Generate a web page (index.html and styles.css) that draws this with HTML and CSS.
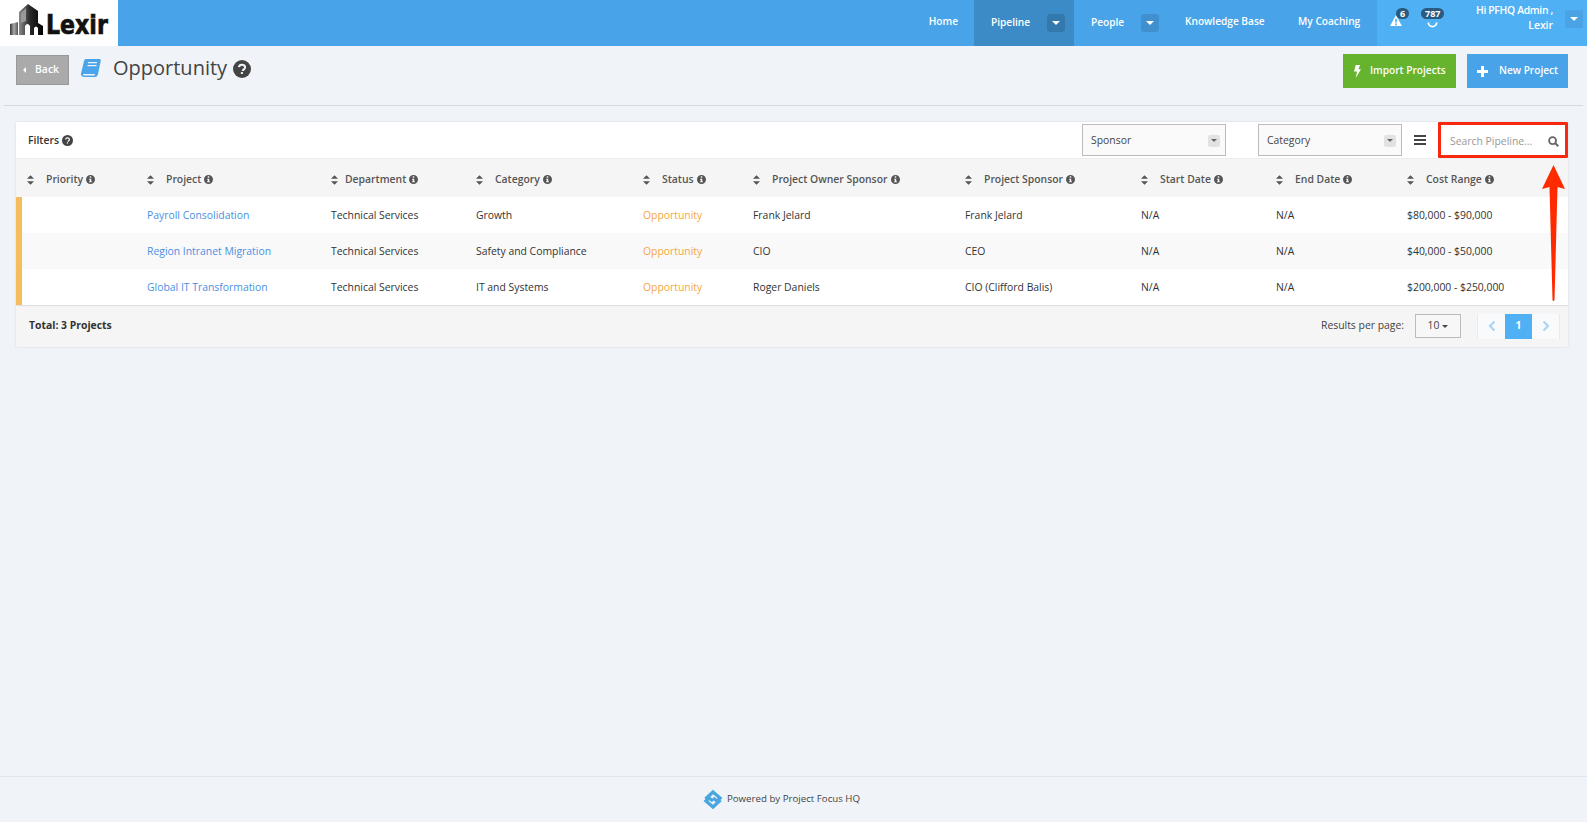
FILE: index.html
```html
<!DOCTYPE html>
<html lang="en">
<head>
<meta charset="utf-8">
<title>Opportunity</title>
<link rel="stylesheet" href="styles.css">
</head>
<body>
<svg class="defs" width="0" height="0" aria-hidden="true">
  <defs>
    <symbol id="sort" viewBox="0 0 8 11"><path d="M4 0 8 4H0zM0 7h8l-4 4z"/></symbol>
    <symbol id="info" viewBox="0 0 12 12"><path fill-rule="evenodd" d="M6 0a6 6 0 1 1 0 12A6 6 0 0 1 6 0zM5 1.800v1.800h2V1.800zM4.200 5v1.200H5v2.200h-.8v1.200h3.600V8.400H7V5z"/></symbol>
    <symbol id="help" viewBox="0 0 18 18"><circle cx="9" cy="9" r="9"/><path d="M5.900 7.200c.2-1.700 1.500-2.500 3.100-2.500 1.800 0 3.100 1 3.100 2.500 0 2.200-2.300 2.100-2.300 3.700" fill="none" stroke="#f0f4f8" stroke-width="2"/><rect x="7.900" y="12" width="2" height="2" fill="#f0f4f8"/></symbol>
    <symbol id="help-w" viewBox="0 0 18 18"><circle cx="9" cy="9" r="9"/><path d="M5.900 7.200c.2-1.700 1.500-2.500 3.100-2.500 1.800 0 3.100 1 3.100 2.500 0 2.200-2.300 2.100-2.300 3.700" fill="none" stroke="#fff" stroke-width="2"/><rect x="7.900" y="12" width="2" height="2" fill="#fff"/></symbol>
    <linearGradient id="bld" x1="0" y1="0" x2="1" y2="0">
      <stop offset="0" stop-color="#8a8a8a"/><stop offset=".45" stop-color="#2a2a2a"/><stop offset="1" stop-color="#000"/>
    </linearGradient>
    <linearGradient id="bld-l" x1="0" y1="0" x2="1" y2="0">
      <stop offset="0" stop-color="#333"/><stop offset=".5" stop-color="#aaa"/><stop offset="1" stop-color="#555"/>
    </linearGradient>
  </defs>
</svg>

<header class="topbar">
  <a class="logo">
    <svg class="logo-mark" viewBox="0 0 34 31" width="34" height="31"><path fill="url(#bld-l)" d="M0 20l8-2v13H0z"/><path fill="url(#bld)" d="M9 8l9-8 10 7v12l5 3v9h-5v-7q-2-3-4 0v7h-4v-9q-2.500-4-5 0v9H9z"/><path fill="#999" d="M11 9l5-5v13l-5 2z"/></svg>
    <span class="logo-text">Lexir</span>
  </a>
  <nav class="nav">
    <a class="nav-item home">Home</a>
    <a class="nav-item active pipeline">Pipeline<span class="caret-box dark"><i class="tri white"></i></span></a>
    <a class="nav-item people">People<span class="caret-box"><i class="tri white"></i></span></a>
    <a class="nav-item kb">Knowledge Base</a>
    <a class="nav-item coach">My Coaching</a>
  </nav>
  <div class="user-zone">
    <div class="notif alert">
      <svg viewBox="0 0 14 13" width="12" height="11"><path fill="#fff" fill-rule="evenodd" d="M7 0l7 13H0zM6 4.500V9h2V4.500zM6 10v2h2v-2z"/></svg>
      <span class="badge">6</span>
    </div>
    <div class="notif sync">
      <svg viewBox="0 0 12 12" width="11" height="11"><path fill="none" stroke="#fff" stroke-width="2" d="M10.500 6A4.500 4.500 0 0 1 1.500 6"/></svg>
      <span class="badge">787</span>
    </div>
    <div class="user"><span class="user-name">Hi PFHQ Admin ,</span><span>Lexir</span></div>
    <span class="caret-box user-caret"><i class="tri white"></i></span>
  </div>
</header>

<section class="page-head">
  <a class="back"><i class="tri-left"></i>Back</a>
  <svg class="book" viewBox="0 0 20 18" width="20" height="18"><path fill="#4aa5ea" d="M5 0h13c1.300 0 2 .8 1.700 2L17 15c-.3 1.500-1.200 3-3 3H3c-2 0-3.300-1.500-3-3.500L3 2c.2-1.200 1-2 2-2z"/><path fill="#f0f4f8" d="M7 3h9v1.300H7zM6.500 6h9v1.300h-9zM2 15h12l-.4 1.500H3c-.7 0-1-.7-1-1.500z"/></svg>
  <h1 class="title">Opportunity</h1>
  <svg class="title-help" width="18" height="18"><use href="#help"/></svg>
  <div class="actions">
    <a class="btn green">
      <svg viewBox="0 0 8 15" width="7" height="15"><path fill="#fff" d="M2 0h5L5 5h3L2 15l1.500-7.500H0z"/></svg>
      Import Projects
    </a>
    <a class="btn blue">
      <svg viewBox="0 0 11 11" width="11" height="11"><path fill="#fff" d="M4 0h3v4h4v3H7v4H4V7H0V4h4z"/></svg>
      New Project
    </a>
  </div>
</section>
<hr class="rule">

<main class="card">
  <div class="filters">
    <span class="filters-label">Filters <svg width="11" height="11" class="filters-help"><use href="#help-w"/></svg></span>
    <div class="filter-controls">
      <div class="select"><span>Sponsor</span><span class="select-caret"><i class="tri"></i></span></div>
      <div class="select"><span>Category</span><span class="select-caret"><i class="tri"></i></span></div>
      <span class="menu"><i></i><i></i><i></i></span>
      <div class="search">
        <span>Search Pipeline...</span>
        <svg viewBox="0 0 12 12" width="11" height="11"><circle cx="5" cy="5" r="3.800" fill="none" stroke="#666" stroke-width="2"/><path d="M8 8l3.200 3.200" stroke="#666" stroke-width="2.200"/></svg>
      </div>
    </div>
  </div>
  <table class="grid">
    <colgroup>
      <col class="c1"><col class="c2"><col class="c3"><col class="c4"><col class="c5"><col class="c6"><col class="c7"><col class="c8"><col class="c9"><col class="c10">
    </colgroup>
    <thead>
      <tr>
        <th class="first"><svg class="sort"><use href="#sort"/></svg>Priority<svg class="info"><use href="#info"/></svg></th>
        <th><svg class="sort"><use href="#sort"/></svg>Project<svg class="info"><use href="#info"/></svg></th>
        <th class="tight"><svg class="sort"><use href="#sort"/></svg>Department<svg class="info"><use href="#info"/></svg></th>
        <th><svg class="sort"><use href="#sort"/></svg>Category<svg class="info"><use href="#info"/></svg></th>
        <th><svg class="sort"><use href="#sort"/></svg>Status<svg class="info"><use href="#info"/></svg></th>
        <th><svg class="sort"><use href="#sort"/></svg>Project Owner Sponsor<svg class="info"><use href="#info"/></svg></th>
        <th><svg class="sort"><use href="#sort"/></svg>Project Sponsor<svg class="info"><use href="#info"/></svg></th>
        <th><svg class="sort"><use href="#sort"/></svg>Start Date<svg class="info"><use href="#info"/></svg></th>
        <th><svg class="sort"><use href="#sort"/></svg>End Date<svg class="info"><use href="#info"/></svg></th>
        <th><svg class="sort"><use href="#sort"/></svg>Cost Range<svg class="info"><use href="#info"/></svg></th>
      </tr>
    </thead>
    <tbody>
      <tr>
        <td class="stripe"></td><td><a class="link">Payroll Consolidation</a></td><td>Technical Services</td><td>Growth</td><td class="status">Opportunity</td><td>Frank Jelard</td><td>Frank Jelard</td><td>N/A</td><td>N/A</td><td>$80,000 - $90,000</td>
      </tr>
      <tr>
        <td class="stripe"></td><td><a class="link">Region Intranet Migration</a></td><td>Technical Services</td><td>Safety and Compliance</td><td class="status">Opportunity</td><td>CIO</td><td>CEO</td><td>N/A</td><td>N/A</td><td>$40,000 - $50,000</td>
      </tr>
      <tr>
        <td class="stripe"></td><td><a class="link">Global IT Transformation</a></td><td>Technical Services</td><td>IT and Systems</td><td class="status">Opportunity</td><td>Roger Daniels</td><td>CIO (Clifford Balis)</td><td>N/A</td><td>N/A</td><td>$200,000 - $250,000</td>
      </tr>
    </tbody>
  </table>
  <div class="card-foot">
    <strong>Total: 3 Projects</strong>
    <div class="paging">
      <span class="per-page">Results per page:</span>
      <span class="page-size">10<i class="tri dark-tri"></i></span>
      <div class="pager">
        <a class="page-btn"><svg viewBox="0 0 8 12" width="8" height="12"><path d="M6.500 1.500 2 6l4.500 4.500" fill="none" stroke="#a9d6f5" stroke-width="2.200"/></svg></a>
        <a class="page-btn current">1</a>
        <a class="page-btn"><svg viewBox="0 0 8 12" width="8" height="12"><path d="M1.500 1.500 6 6l-4.500 4.500" fill="none" stroke="#a9d6f5" stroke-width="2.200"/></svg></a>
      </div>
    </div>
  </div>
</main>

<svg class="arrow" viewBox="0 0 23 137" width="23" height="137"><path fill="#fe2a00" d="M11.500 0 23 24l-7.500-2-3 113q-1 2-2 0l-3-113L0 24z"/></svg>

<footer class="footer">
  <svg viewBox="0 0 20 20" width="20" height="20"><path fill="none" stroke="#4aa5e0" stroke-width="3.400" d="M2.500 10 10 3l7 6-3 3-4-3"/><path fill="none" stroke="#4aa5e0" stroke-width="3.400" d="M17.500 11 10 18l-7-6 3-3 4 3"/></svg>
  <span>Powered by Project Focus HQ</span>
</footer>
</body>
</html>
```
FILE: styles.css
```css
* { box-sizing: border-box; }
html, body { height: 100%; }
body {
  margin: 0;
  min-height: 100vh;
  display: flex;
  flex-direction: column;
  position: relative;
  overflow: hidden;
  background: #f0f4f8;
  color: #333;
  font: 10.4px/1.3 "Open Sans", "Liberation Sans", sans-serif;
}
.defs { position: absolute; }
a { text-decoration: none; color: inherit; }

/* top bar */
.topbar { height: 46px; display: flex; background: #48a3e8; color: #fff; flex: none; }
.logo { width: 118px; background: #fff; display: flex; align-items: flex-end; padding: 0 0 11px 10px; }
.logo-mark { flex: none; margin-right: 2px; }
.logo-text { font: 700 26px/20px "DejaVu Sans", sans-serif; color: #111; -webkit-text-stroke: .7px #111; transform: scaleX(.85); transform-origin: left; }
.nav { margin-left: auto; display: flex; font-weight: 600; font-size: 10.15px; }
.nav-item { display: flex; align-items: center; flex: none; height: 46px; white-space: nowrap; padding-bottom: 2px; }
.home { padding-right: 16px; }
.pipeline { padding: 0 9px 0 17px; width: 100px; background: #3d8bc6; }
.people { padding: 0 0 0 17px; width: 111px; }
.kb { width: 113px; }
.coach { width: 79px; }
.caret-box { width: 18px; height: 18px; margin-left: auto; border-radius: 3px; background: #4090d0; display: flex; align-items: center; justify-content: center; flex: none; }
.caret-box.dark { background: #3479ad; }
.people .caret-box { margin: 0 26px 0 auto; }
.tri { width: 0; height: 0; border: 4px solid transparent; border-top-color: #666; border-bottom: 0; display: block; }
.tri.white { border-top-color: #fff; }
.user-zone { width: 210px; background: #4fb0f3; display: flex; font-weight: 600; position: relative; }
.notif { position: absolute; top: 17px; line-height: 0; }
.alert { left: 13px; top: 15px; }
.sync { left: 50px; }
.badge { position: absolute; top: -9px; height: 11px; padding: 0 4px; border-radius: 6px; background: #2a5a80; font: 700 9px/11px "Open Sans", sans-serif; color: #fff; }
.alert .badge { left: 6px; top: -7px; }
.sync .badge { left: -6px; }
.user { margin-left: auto; width: 120px; padding-top: 3px; display: flex; flex-direction: column; align-items: flex-end; line-height: 15px; margin-right: 34px; }
.user-name { letter-spacing: -.35px; }
.user-caret { position: absolute; right: 4px; top: 10px; background: #4aa3e4; }

/* page head */
.page-head { flex: none; display: flex; align-items: flex-start; padding: 8px 19px 0 16px; height: 59px; }
.back { margin-top: 1px; width: 53px; height: 30px; display: flex; align-items: center; padding-left: 6px; background: #aaa; border: 1px solid #999; color: #fff; font-weight: 600; }
.tri-left { width: 0; height: 0; border: 3.500px solid transparent; border-right-color: #fff; border-left: 0; margin-right: 9px; }
.book { margin: 5px 0 0 12px; }
.title { margin: 0 0 0 12px; font-size: 20px; font-weight: 400; line-height: 27px; color: #444; }
.title-help { margin: 6px 0 0 6px; fill: #444; }
.actions { margin-left: auto; display: flex; gap: 11px; }
.btn { height: 34px; display: flex; align-items: center; font-weight: 600; color: #fff; font-size: 10.15px; }
.btn.green { width: 113px; background: #66b32e; padding-left: 11px; gap: 9px; }
.btn.blue { width: 101px; background: #48a3e8; padding-left: 10px; gap: 11px; }
.rule { flex: none; height: 1px; margin: 0 4px; border: 0; background: #d5dae0; }

/* card */
.card { flex: none; margin: 16px 19px 0 16px; background: #fff; box-shadow: 0 0 2px rgba(0, 0, 0, .12); }
.filters { height: 37px; display: flex; align-items: center; padding-left: 12px; border-bottom: 1px solid #eceded; }
.filters-label { font-weight: 600; display: flex; align-items: center; gap: 3px; color: #333; padding-top: 1px; }
.filters-help { fill: #444; }
.filter-controls { margin-left: auto; display: flex; align-items: center; gap: 12px; }
.select { width: 144px; height: 32px; margin-right: 20px; display: flex; align-items: center; justify-content: space-between; padding: 1px 5px 0 8px; border: 1px solid #bbb; background: #fafafa; color: #444; }
.select + .select { margin-right: 0; }
.select-caret { width: 12px; height: 12px; border-radius: 2px; background: #e2e2e2; display: flex; align-items: center; justify-content: center; }
.select-caret .tri { border-width: 3px; border-bottom: 0; }
.menu { width: 12px; display: flex; flex-direction: column; gap: 2px; }
.menu i { display: block; height: 2px; background: #444; }
.search { width: 130px; height: 36px; display: flex; align-items: center; justify-content: space-between; padding: 3px 6px 0 9px; border: 3px solid #f8280f; border-radius: 1px; color: #999; background: #fff; }

/* table */
.grid { width: 100%; border-collapse: collapse; table-layout: fixed; }
.c1 { width: 131px; } .c2 { width: 184px; } .c3 { width: 145px; } .c4 { width: 167px; } .c5 { width: 110px; }
.c6 { width: 212px; } .c7 { width: 176px; } .c8 { width: 135px; } .c9 { width: 131px; } .c10 { width: 161px; }
.grid th { height: 38px; padding: 4px 0 0; text-align: left; background: #f5f5f5; font-weight: 600; color: #555; white-space: nowrap; }
.grid th.first { padding-left: 11px; }
.sort { width: 7px; height: 10px; margin-right: 12px; fill: #555; vertical-align: -2px; }
.tight .sort { margin-right: 7px; }
.info { width: 9px; height: 9px; margin-left: 3px; fill: #555; vertical-align: -1px; }
.grid td { height: 36px; padding: 2px 0 0; color: #333; white-space: nowrap; }
.grid tbody tr:nth-child(even) td { background: #f9f9f9; }
.grid td.stripe { background: linear-gradient(90deg, #f5bd5c 6px, transparent 6px); }
.grid tbody tr:nth-child(even) td.stripe { background: linear-gradient(90deg, #f5bd5c 6px, #f9f9f9 6px); }
.link { color: #4a90e2; }
.grid td.status { color: #f5a742; }
.card-foot { height: 42px; display: flex; align-items: center; justify-content: space-between; padding: 0 8px 1px 13px; background: #f5f5f5; border-top: 1px solid #dedede; }
.card-foot strong { font-weight: 700; color: #333; }
.paging { display: flex; align-items: center; }
.per-page { color: #444; }
.page-size { width: 46px; height: 24px; margin-left: 11px; display: flex; align-items: center; justify-content: center; gap: 3px; border: 1px solid #bbb; background: #f7f7f7; color: #444; }
.dark-tri { border-width: 3px; border-bottom: 0; border-top-color: #444; }
.pager { display: flex; margin-left: 16px; height: 25px; border: 1px solid #e8eaec; }
.page-btn { width: 27px; margin: -1px 0; display: flex; align-items: center; justify-content: center; background: #f9fafb; }
.page-btn.current { background: #4fb0f3; color: #fff; font-weight: 700; }

/* annotation */
.arrow { position: absolute; left: 1542px; top: 165px; }

/* footer */
.footer { flex: none; margin-top: auto; height: 46px; display: flex; align-items: center; justify-content: center; gap: 4px; border-top: 1px solid #dfe6ee; color: #444; font-size: 9.700px; padding: 0 24px 1px 0; }
```
